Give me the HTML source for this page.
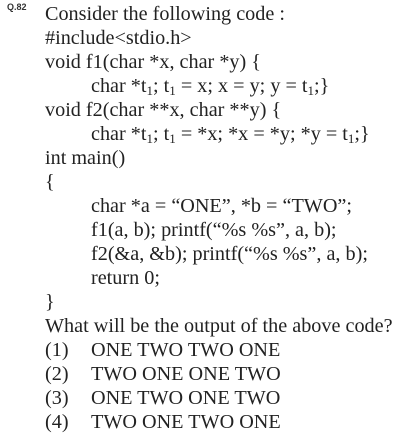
<!DOCTYPE html>
<html><head><style>
body{margin:0;width:418px;height:435px;background:#fff;overflow:hidden;position:relative;font-family:"Liberation Serif",serif;color:#222;}
.l{position:absolute;left:45px;font-size:20.2px;line-height:24px;white-space:pre;}
.i{left:91px;}
.q{position:absolute;left:7px;top:2px;font:bold 9px "Liberation Sans",sans-serif;color:#333;}
sub{font-size:13px;vertical-align:-3px;line-height:0;}
.n{display:inline-block;width:46px;}
</style></head><body>
<div class="q">Q.82</div>
<div class="l" style="top:2px">Consider the following code :</div>
<div class="l" style="top:26px">#include&lt;stdio.h&gt;</div>
<div class="l" style="top:50px">void f1(char *x, char *y) {</div>
<div class="l i" style="top:74px">char *t<sub>1</sub>; t<sub>1</sub> = x; x = y; y = t<sub>1</sub>;}</div>
<div class="l" style="top:98px">void f2(char **x, char **y) {</div>
<div class="l i" style="top:122px">char *t<sub>1</sub>; t<sub>1</sub> = *x; *x = *y; *y = t<sub>1</sub>;}</div>
<div class="l" style="top:146px">int main()</div>
<div class="l" style="top:170px">{</div>
<div class="l i" style="top:194px">char *a = “ONE”, *b = “TWO”;</div>
<div class="l i" style="top:218px">f1(a, b); printf(“%s %s”, a, b);</div>
<div class="l i" style="top:242px">f2(&amp;a, &amp;b); printf(“%s %s”, a, b);</div>
<div class="l i" style="top:266px">return 0;</div>
<div class="l" style="top:290px">}</div>
<div class="l" style="top:314px">What will be the output of the above code?</div>
<div class="l" style="top:338px"><span class="n">(1)</span>ONE TWO TWO ONE</div>
<div class="l" style="top:362px"><span class="n">(2)</span>TWO ONE ONE TWO</div>
<div class="l" style="top:386px"><span class="n">(3)</span>ONE TWO ONE TWO</div>
<div class="l" style="top:410px"><span class="n">(4)</span>TWO ONE TWO ONE</div>
</body></html>
